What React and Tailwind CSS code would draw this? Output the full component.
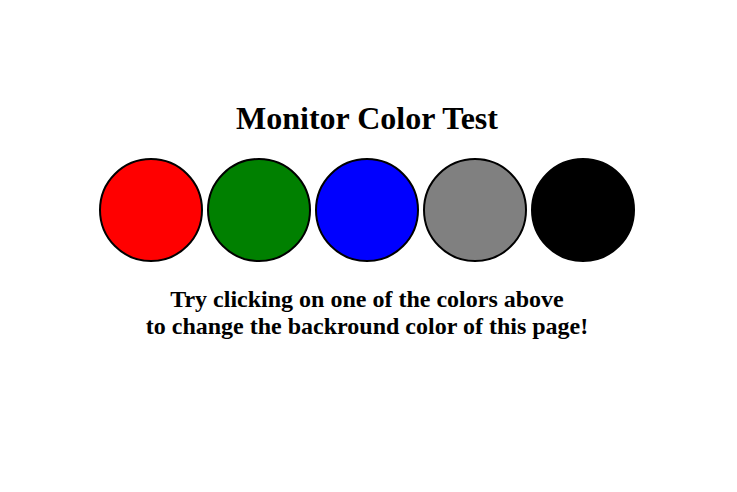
import { useState } from 'react';

const COLORS = [
  { name: 'red', swatch: 'bg-[#ff0000]', page: 'bg-[#ff0000]' },
  { name: 'green', swatch: 'bg-[#008000]', page: 'bg-[#008000]' },
  { name: 'blue', swatch: 'bg-[#0000ff]', page: 'bg-[#0000ff]' },
  { name: 'gray', swatch: 'bg-[#808080]', page: 'bg-[#808080]' },
  { name: 'black', swatch: 'bg-black', page: 'bg-black' },
];

export default function App() {
  const [page, setPage] = useState('bg-white');

  return (
    <main
      className={`min-h-screen pl-2 pr-[11px] pt-[100px] text-center font-['Liberation_Serif',serif] font-bold text-black ${page}`}
    >
      <h1 className="text-[32px] leading-9">Monitor Color Test</h1>

      {/* Color buttons */}
      <div className="mt-[22px] flex flex-wrap justify-center gap-1">
        {COLORS.map(({ name, swatch, page: pageColor }) => (
          <button
            key={name}
            type="button"
            aria-label={name}
            onClick={() => setPage(pageColor)}
            className={`size-[104px] cursor-pointer rounded-full border-2 border-black ${swatch}`}
          />
        ))}
      </div>

      <h2 className="mt-6 text-2xl leading-[27px]">
        Try clicking on one of the colors above
        <br />
        to change the backround color of this page!
      </h2>
    </main>
  );
}
